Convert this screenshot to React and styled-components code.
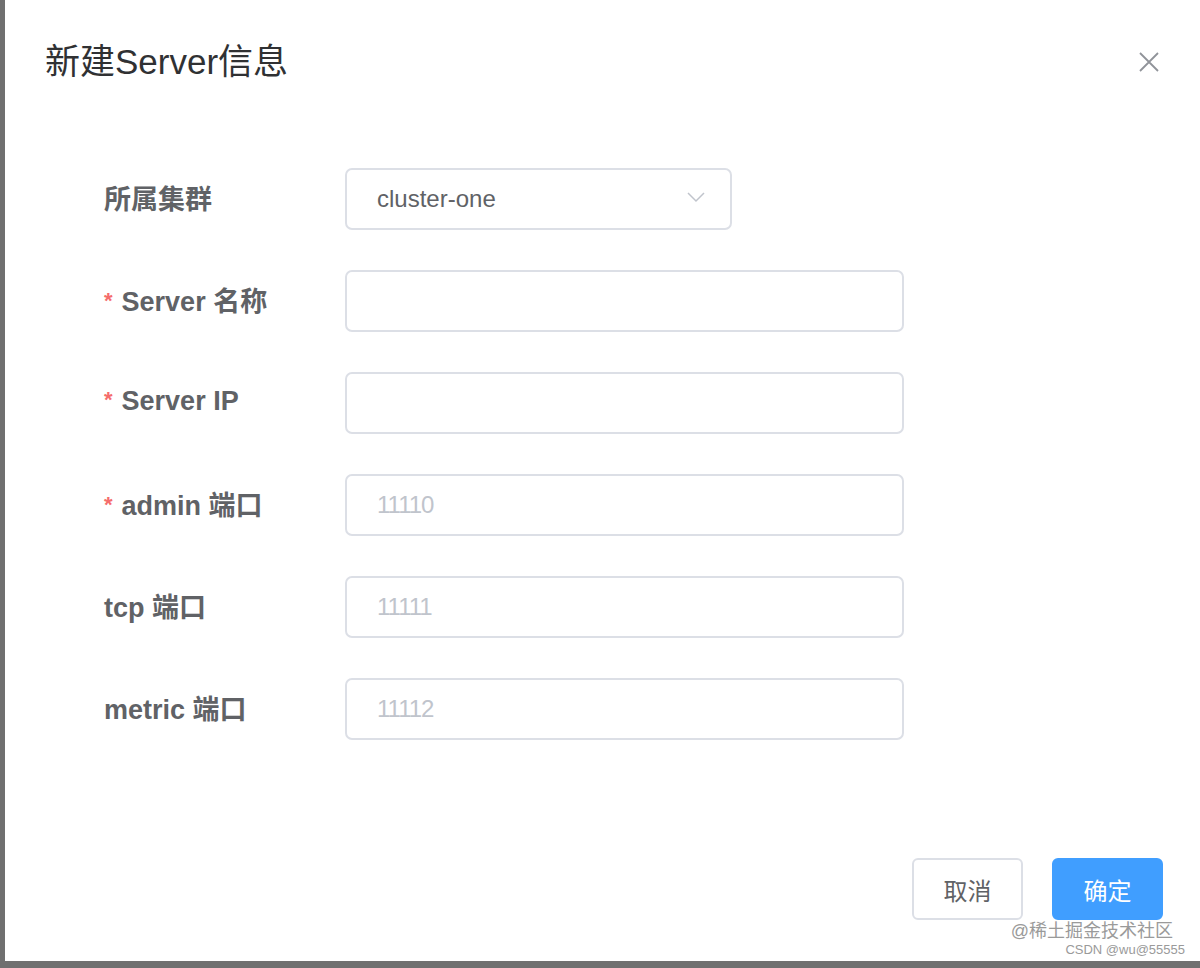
import React from 'react';
import styled, { createGlobalStyle } from 'styled-components';

const GlobalStyle = createGlobalStyle`
  html, body {
    margin: 0;
    padding: 0;
    background: #707070;
    font-family: "Helvetica Neue", "Liberation Sans", Arial, "Noto Sans CJK SC", sans-serif;
  }
`;

const Dialog = styled.div`
  position: relative;
  margin-left: 5px;
  width: 1195px;
  height: 961px;
  background: #fff;
  display: flex;
  flex-direction: column;
  box-sizing: border-box;
`;

const Header = styled.div`
  display: flex;
  align-items: center;
  justify-content: space-between;
  padding: 44px 39px 0 40px;
  height: 36px;
`;

const Title = styled.div`
  font-size: 35px;
  line-height: 36px;
  color: #303133;
`;

const CloseButton = styled.button`
  border: none;
  background: none;
  padding: 0;
  width: 24px;
  height: 24px;
  color: #909399;
  cursor: pointer;
  display: flex;
  align-items: center;
  justify-content: center;
`;

const Form = styled.form`
  display: flex;
  flex-direction: column;
  gap: 40px;
  padding: 88px 0 0 99px;
`;

const Row = styled.div`
  display: flex;
  align-items: center;
  height: 62px;
`;

const Label = styled.label`
  width: 241px;
  font-size: 27px;
  font-weight: bold;
  color: #606266;
  white-space: nowrap;
  padding-bottom: 4px;
`;

const Star = styled.span`
  color: #f56c6c;
  font-size: 22px;
  margin-right: 9px;
  vertical-align: 3px;
`;

const Field = styled.div`
  position: relative;
  width: ${p => p.$width}px;
  height: 62px;
`;

const Input = styled.input`
  width: 100%;
  height: 100%;
  box-sizing: border-box;
  border: 2px solid #dcdfe6;
  border-radius: 7px;
  padding: 0 30px;
  font-size: 24px;
  font-family: inherit;
  color: #606266;
  background: #fff;
  outline: none;
  &::placeholder {
    color: #c0c4cc;
    letter-spacing: -1px;
  }
`;

const Arrow = styled.span`
  position: absolute;
  right: 26px;
  top: 22px;
  color: #c0c4cc;
  display: flex;
`;

const Footer = styled.div`
  margin-top: auto;
  display: flex;
  justify-content: flex-end;
  gap: 29px;
  padding: 0 37px 41px 0;
`;

const Button = styled.button`
  width: 111px;
  height: 62px;
  box-sizing: border-box;
  border-radius: 6px;
  font-size: 24px;
  font-family: inherit;
  border: 2px solid ${p => (p.$primary ? '#409eff' : '#dcdfe6')};
  background: ${p => (p.$primary ? '#409eff' : '#fff')};
  color: ${p => (p.$primary ? '#fff' : '#606266')};
  cursor: pointer;
`;

const Watermark = styled.div`
  position: absolute;
  right: 15px;
  bottom: 3px;
  display: flex;
  flex-direction: column;
  align-items: flex-end;
  color: #9a9a9a;
  line-height: 1.2;
`;

const WatermarkMain = styled.span`
  font-size: 18px;
  margin-right: 12px;
`;

const WatermarkSub = styled.span`
  font-size: 13px;
`;

const fields = [
  { label: 'Server 名称', required: true },
  { label: 'Server IP', required: true },
  { label: 'admin 端口', required: true, placeholder: '11110' },
  { label: 'tcp 端口', placeholder: '11111' },
  { label: 'metric 端口', placeholder: '11112' },
];

export default function App() {
  return (
    <>
      <GlobalStyle />
      <Dialog>
        <Header>
          <Title>新建Server信息</Title>
          <CloseButton>
            <svg width="22" height="22" viewBox="0 0 22 22">
              <path d="M2 2 L20 20 M20 2 L2 20" stroke="currentColor" strokeWidth="1.8" />
            </svg>
          </CloseButton>
        </Header>
        <Form>
          <Row>
            <Label>所属集群</Label>
            <Field $width={387}>
              <Input readOnly value="cluster-one" />
              <Arrow>
                <svg width="20" height="14" viewBox="0 0 20 14">
                  <path d="M2 3 L10 11 L18 3" fill="none" stroke="currentColor" strokeWidth="1.5" />
                </svg>
              </Arrow>
            </Field>
          </Row>
          {fields.map(f => (
            <Row key={f.label}>
              <Label>
                {f.required && <Star>*</Star>}
                {f.label}
              </Label>
              <Field $width={559}>
                <Input placeholder={f.placeholder || ''} />
              </Field>
            </Row>
          ))}
        </Form>
        <Footer>
          <Button>取消</Button>
          <Button $primary>确定</Button>
        </Footer>
        <Watermark>
          <WatermarkMain>@稀土掘金技术社区</WatermarkMain>
          <WatermarkSub>CSDN @wu@55555</WatermarkSub>
        </Watermark>
      </Dialog>
    </>
  );
}
